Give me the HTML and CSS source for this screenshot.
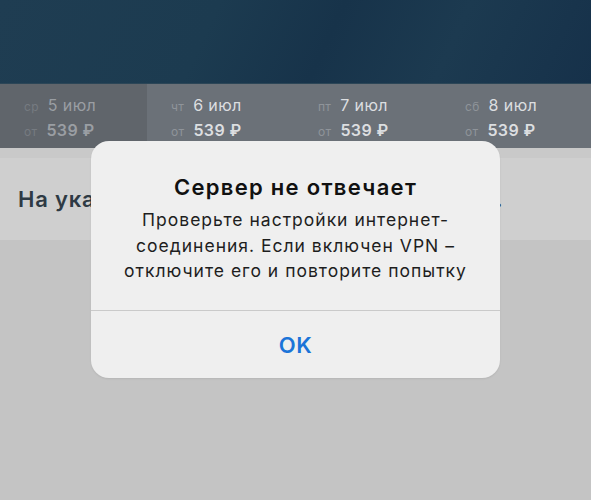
FILE: index.html
```html
<!DOCTYPE html>
<html lang="ru">
<head>
    <meta charset="UTF-8">
    <meta name="viewport" content="width=device-width, initial-scale=1.0">
    <title>Сервер не отвечает</title>
    <link rel="stylesheet" href="styles.css">
</head>
<body>
    <div class="screen">
        <div class="top"></div>

        <!-- даты -->
        <ul class="days">
            <li class="day past">
                <p><span class="small">ср</span>5 июл</p>
                <p><span class="small">от</span><b>539 ₽</b></p>
            </li>
            <li class="day">
                <p><span class="small">чт</span>6 июл</p>
                <p><span class="small">от</span><b>539 ₽</b></p>
            </li>
            <li class="day">
                <p><span class="small">пт</span>7 июл</p>
                <p><span class="small">от</span><b>539 ₽</b></p>
            </li>
            <li class="day">
                <p><span class="small">сб</span>8 июл</p>
                <p><span class="small">от</span><b>539 ₽</b></p>
            </li>
        </ul>

        <div class="gap"></div>
        <div class="notice">На указанные даты билетов не осталось.</div>

        <!-- окно ошибки -->
        <div class="alert">
            <div class="alert-body">
                <h2 class="alert-title">Сервер не отвечает</h2>
                <p class="alert-text">Проверьте настройки интернет-<br>соединения. Если включен VPN –<br>отключите его и повторите попытку</p>
            </div>
            <button class="alert-btn">OK</button>
        </div>
    </div>
</body>
</html>
```

FILE: styles.css
```css
*{margin: 0; padding: 0; box-sizing: border-box;}
body {background-color: #c4c4c4; font-family: Inter, Roboto, "Noto Sans", sans-serif;}
ul {list-style: none;}

.screen {width: 591px; height: 500px; position: relative; overflow: hidden; background: #c4c4c4;}

.top {height: 84px; background: linear-gradient(115deg, #1f3d52 0%, #1c3b50 35%, #17334a 55%, #1c3a50 75%, #16314a 100%); border-bottom: 1px solid #2c4657;}

.days {display: flex; height: 64px; background: #6b7178;}
.day {width: 147px; padding: 9px 0 0 24px; color: #dcdee0; font-size: 16px; letter-spacing: 0.4px;}
.day p {height: 25px; line-height: 25px; white-space: nowrap;}
.day b {font-weight: 600; font-size: 16px;}
.day .small {font-size: 12px; color: #8f949a; margin-right: 9px; letter-spacing: 0.3px;}
.day.past {background: #60656b; color: #9a9ea3;}
.day.past .small {color: #767b81;}

.gap {height: 10px; background: #c9c9c9;}
.notice {height: 82px; background: #cfcfcf; padding: 28px 0 0 18px; font-size: 22px; font-weight: 600; letter-spacing: 0.78px; color: #2e3a44; white-space: nowrap; overflow: hidden;}

.alert {position: absolute; left: 91px; top: 141px; width: 409px; height: 237px; background: #efefef; border-radius: 18px; display: flex; flex-direction: column; text-align: center; box-shadow: 0 1px 2px rgba(0,0,0,0.08);}
.alert-body {height: 170px; padding-top: 33px; border-bottom: 1px solid #cacaca;}
.alert-title {font-size: 22px; line-height: 27px; font-weight: 600; letter-spacing: 1.3px; color: #111;}
.alert-text {margin-top: 6px; font-size: 17.5px; line-height: 25.5px; letter-spacing: 1px; color: #1e1e1e;}
.alert-btn {flex: 1; border: none; background: none; font-family: inherit; font-size: 22px; font-weight: 600; letter-spacing: 0.5px; color: #1b74d8;}
```
